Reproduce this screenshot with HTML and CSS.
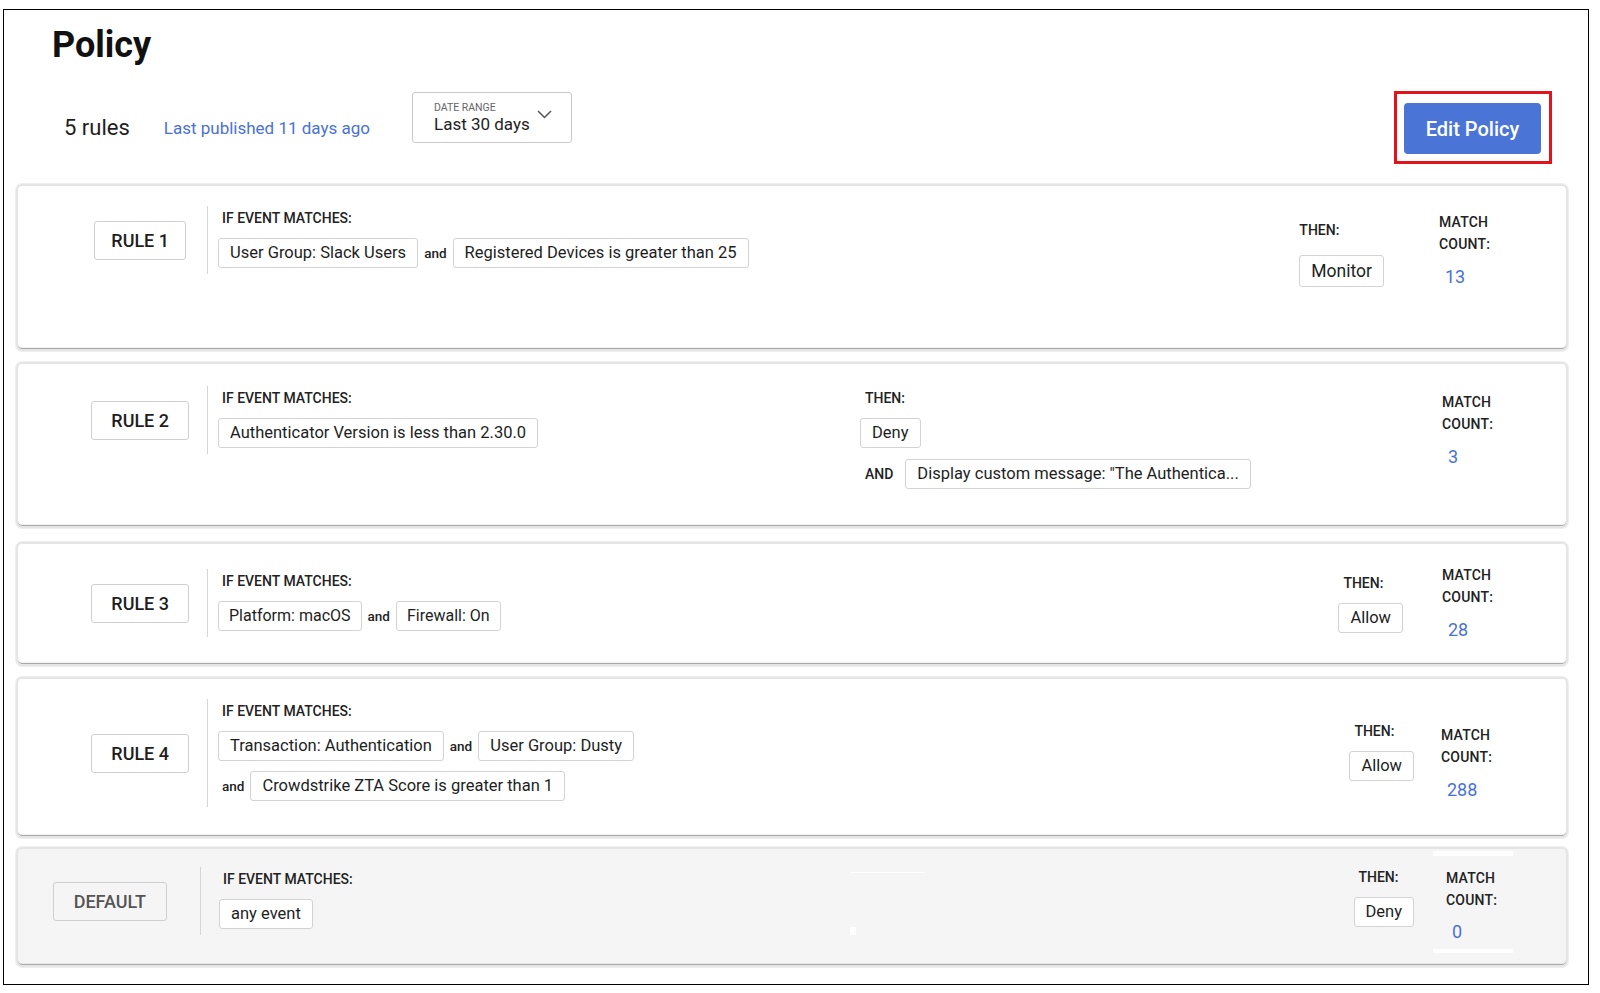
FILE: index.html
```html
<!DOCTYPE html>
<html lang="en">
<head>
<meta charset="utf-8">
<title>Policy</title>
<link rel="stylesheet" href="styles.css">
</head>
<body>
<div class="page">
  <div class="frame">
    <h1 class="title">Policy</h1>
    <div class="meta-row">
      <span class="rules-count">5 rules</span>
      <a class="published">Last published 11 days ago</a>
      <div class="date-range">
        <div class="date-text">
          <div class="date-label">DATE RANGE</div>
          <div class="date-value">Last 30 days</div>
        </div>
        <svg class="chevron" width="15" height="9" viewBox="0 0 15 9"><polyline points="1,1 7.5,7.5 14,1" fill="none" stroke="#555" stroke-width="1.5"/></svg>
      </div>
      <div class="edit-wrap"><button class="edit-btn">Edit Policy</button></div>
    </div>

    <div class="cards">
      <section class="card card-1">
        <div class="lhs">
          <div class="rule-col"><span class="rule-badge">RULE 1</span></div>
          <div class="cond">
            <div class="label">IF EVENT MATCHES:</div>
            <div class="chips">
              <span class="chip">User Group: Slack Users</span>
              <span class="and">and</span>
              <span class="chip">Registered Devices is greater than 25</span>
            </div>
          </div>
        </div>
        <div class="then">
          <div class="label then-label">THEN:</div>
          <span class="chip chip-lg">Monitor</span>
        </div>
        <div class="match">
          <div class="match-label">MATCH<br>COUNT:</div>
          <div class="match-num">13</div>
        </div>
      </section>

      <section class="card card-2">
        <div class="lhs">
          <div class="rule-col"><span class="rule-badge">RULE 2</span></div>
          <div class="cond">
            <div class="label">IF EVENT MATCHES:</div>
            <div class="chips">
              <span class="chip">Authenticator Version is less than 2.30.0</span>
            </div>
          </div>
        </div>
        <div class="then">
          <div class="label then-label">THEN:</div>
          <span class="chip">Deny</span>
          <div class="then-and">
            <span class="and-caps">AND</span>
            <span class="chip">Display custom message: "The Authentica...</span>
          </div>
        </div>
        <div class="match">
          <div class="match-label">MATCH<br>COUNT:</div>
          <div class="match-num">3</div>
        </div>
      </section>

      <section class="card card-3">
        <div class="lhs">
          <div class="rule-col"><span class="rule-badge">RULE 3</span></div>
          <div class="cond">
            <div class="label">IF EVENT MATCHES:</div>
            <div class="chips">
              <span class="chip">Platform: macOS</span>
              <span class="and">and</span>
              <span class="chip">Firewall: On</span>
            </div>
          </div>
        </div>
        <div class="then">
          <div class="label then-label">THEN:</div>
          <span class="chip">Allow</span>
        </div>
        <div class="match">
          <div class="match-label">MATCH<br>COUNT:</div>
          <div class="match-num">28</div>
        </div>
      </section>

      <section class="card card-4">
        <div class="lhs">
          <div class="rule-col"><span class="rule-badge">RULE 4</span></div>
          <div class="cond">
            <div class="label">IF EVENT MATCHES:</div>
            <div class="chip-rows">
              <div class="chips">
                <span class="chip">Transaction: Authentication</span>
                <span class="and">and</span>
                <span class="chip">User Group: Dusty</span>
              </div>
              <div class="chips">
                <span class="and and-lead">and</span>
                <span class="chip">Crowdstrike ZTA Score is greater than 1</span>
              </div>
            </div>
          </div>
        </div>
        <div class="then">
          <div class="label then-label">THEN:</div>
          <span class="chip">Allow</span>
        </div>
        <div class="match">
          <div class="match-label">MATCH<br>COUNT:</div>
          <div class="match-num">288</div>
        </div>
      </section>

      <section class="card card-5">
        <div class="lhs">
          <div class="rule-col"><span class="rule-badge badge-default">DEFAULT</span></div>
          <div class="cond">
            <div class="label">IF EVENT MATCHES:</div>
            <div class="chips">
              <span class="chip">any event</span>
            </div>
          </div>
        </div>
        <div class="then">
          <div class="label then-label">THEN:</div>
          <span class="chip">Deny</span>
        </div>
        <div class="match">
          <div class="match-label">MATCH<br>COUNT:</div>
          <div class="match-num">0</div>
        </div>
        <span class="artifact art-line"></span>
        <span class="artifact art-dot"></span>
        <span class="artifact art-bar-top"></span>
        <span class="artifact art-bar-bottom"></span>
      </section>
    </div>
  </div>
</div>
</body>
</html>
```

FILE: styles.css
```css
* { box-sizing: border-box; }

html, body {
  margin: 0;
  padding: 0;
  background: #fff;
}

body {
  font-family: Roboto, "Liberation Sans", sans-serif;
  color: #1e1e1e;
}

.page {
  padding: 9px 11px 8px 3px;
}

.frame {
  border: 1px solid #000;
  height: 976px;
  padding: 0 20px 0 12px;
}

.title {
  margin: 15px 0 0 36px;
  font-size: 36px;
  line-height: 40px;
  font-weight: 700;
  color: #111;
}

.meta-row {
  display: flex;
  align-items: center;
  height: 73px;
  margin-top: 26px;
  padding-left: 48px;
}

.rules-count {
  font-size: 22px;
  margin-right: 34px;
  color: #1e1e1e;
}

.published {
  font-size: 17px;
  color: #4a72d4;
  margin-right: 42px;
}

.date-range {
  align-self: flex-start;
  margin-top: 1px;
  width: 160px;
  height: 51px;
  border: 1px solid #c9c9c9;
  border-radius: 3px;
  padding: 9px 0 0 21px;
  display: flex;
  align-items: flex-start;
}

.date-label {
  font-size: 10.5px;
  line-height: 12px;
  color: #666;
}

.date-value {
  font-size: 17px;
  line-height: 20px;
  color: #1e1e1e;
}

.chevron {
  margin: 8px 0 0 7px;
}

.edit-wrap {
  margin-left: auto;
  margin-right: 16px;
  border: 3px solid #e3131b;
  padding: 9px 8px 7px 7px;
}

.edit-btn {
  display: block;
  width: 137px;
  height: 51px;
  border: none;
  border-radius: 4px;
  background: #4a75d6;
  color: #fff;
  font-family: inherit;
  font-size: 20px;
  font-weight: 500;
}

.cards {
  margin-top: 20px;
  display: flex;
  flex-direction: column;
}

.card {
  position: relative;
  display: flex;
  align-items: flex-start;
  background: #fff;
  border: 2px solid #e5e5e5;
  border-radius: 6px;
  box-shadow: inset 0 -1px 0 #a9a9a9, inset 0 -2px 1px rgba(0, 0, 0, 0.06), 0 0 0 1px #efefef;
}

.card-1 { height: 167px; }
.card-2 { height: 166px; margin-top: 11px; }
.card-3 { height: 124px; margin-top: 14px; }
.card-4 { height: 161px; margin-top: 11px; }
.card-5 { height: 120px; margin-top: 9px; background: #f5f5f5; }

.lhs {
  display: flex;
  align-items: center;
  flex: 1;
}

.rule-col {
  width: 189px;
  display: flex;
  justify-content: flex-end;
  padding-right: 18px;
}

.rule-badge {
  display: inline-block;
  height: 39px;
  line-height: 37px;
  padding: 0 19px;
  border: 1px solid #cfcfcf;
  border-radius: 3px;
  font-size: 18px;
  font-weight: 500;
  color: #1e1e1e;
  background: #fff;
}

.card-1 .rule-col { padding-right: 21px; }
.card-1 .rule-badge { padding: 0 16px; }

.badge-default {
  background: #f5f5f5;
  color: #555;
  padding: 0 20px;
}

.cond {
  border-left: 1px solid #d6d6d6;
  padding: 4px 0 6px 14px;
}

.label {
  font-size: 14px;
  line-height: 16px;
  font-weight: 500;
  color: #222;
  margin-bottom: 12px;
}

.chips {
  display: flex;
  align-items: center;
  gap: 6px;
  margin-left: -4px;
}

.chip-rows {
  display: flex;
  flex-direction: column;
  gap: 10px;
}

.chip {
  display: inline-block;
  height: 30px;
  line-height: 28px;
  padding: 0 11px;
  border: 1px solid #d3d3d3;
  border-radius: 3px;
  background: #fff;
  font-size: 16.5px;
  color: #1e1e1e;
  white-space: nowrap;
}

.card-3 .cond .chip { font-size: 16px; padding: 0 10px; }

.chip-lg {
  font-size: 17.5px;
  height: 32px;
  line-height: 30px;
}

.and {
  font-size: 13.5px;
  font-weight: 500;
  color: #222;
}

.and-lead {
  margin-left: 4px;
}

.and-caps {
  font-size: 14px;
  font-weight: 500;
  color: #222;
}

.then {
  display: flex;
  flex-direction: column;
  align-items: flex-start;
}

.then-label {
  padding-left: 5px;
}

.then-and {
  display: flex;
  align-items: center;
  gap: 12px;
  margin-top: 11px;
  padding-left: 5px;
}

.match-label {
  font-size: 14px;
  line-height: 22px;
  font-weight: 500;
  color: #222;
  letter-spacing: 0.2px;
}

.match-num {
  margin-top: 11px;
  padding-left: 6px;
  font-size: 18px;
  line-height: 22px;
  color: #4a72d4;
}

/* per-card placement (collage of separate captures) */
.card-1 .lhs { margin-top: 20px; }
.card-1 .then { margin-top: 36px; margin-right: 55px; }
.card-1 .then-label { padding-left: 0; margin-bottom: 17px; }
.card-1 .match { margin-top: 25px; width: 127px; }

.card-2 .lhs { margin-top: 22px; flex: 0 0 842px; }
.card-2 .then { margin-top: 26px; flex: 1; }
.card-2 .match { margin-top: 27px; width: 124px; }

.card-3 .lhs { margin-top: 25px; }
.card-3 .then { margin-top: 31px; margin-right: 39px; }
.card-3 .match { margin-top: 20px; width: 124px; }

.card-4 .lhs { margin-top: 20px; }
.card-4 .then { margin-top: 44px; margin-right: 27px; }
.card-4 .match { margin-top: 45px; width: 125px; }

.card-5 .lhs { margin-top: 18px; }
.card-5 .rule-col { width: 182px; padding-right: 33px; }
.card-5 .cond { padding-left: 22px; }
.card-5 .then { margin-top: 20px; margin-right: 32px; }
.card-5 .match { margin-top: 18px; width: 120px; }
.card-5 .match-num { margin-top: 10px; }

/* stray white marks present in the captured image */
.artifact {
  position: absolute;
  background: #fff;
}
.art-line { left: 832px; top: 23px; width: 75px; height: 1px; }
.art-dot { left: 832px; top: 78px; width: 6px; height: 8px; }
.art-bar-top { left: 1415px; top: 2px; width: 80px; height: 5px; }
.art-bar-bottom { left: 1415px; top: 100px; width: 80px; height: 4px; }
```
